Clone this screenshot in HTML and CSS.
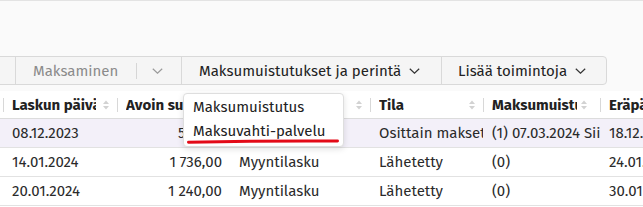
FILE: index.html
```html
<!DOCTYPE html>
<html lang="fi">
<head>
<meta charset="utf-8">
<title>Laskut</title>
<link rel="stylesheet" href="styles.css">
</head>
<body>
<div class="top">
  <div class="toolbar">
    <div class="btn btn-cut"></div>
    <div class="btn btn-pay disabled">
      <span class="label">Maksaminen</span>
      <span class="vsep"></span>
      <svg class="chev" width="11" height="6" viewBox="0 0 11 6"><path d="M0.8 0.8L5.5 5.2L10.2 0.8" fill="none" stroke="currentColor" stroke-width="1.2"/></svg>
    </div>
    <div class="btn btn-remind">
      <span class="label">Maksumuistutukset ja perintä</span>
      <svg class="chev" width="11" height="6" viewBox="0 0 11 6"><path d="M0.8 0.8L5.5 5.2L10.2 0.8" fill="none" stroke="currentColor" stroke-width="1.2"/></svg>
    </div>
    <div class="btn btn-more">
      <span class="label">Lisää toimintoja</span>
      <svg class="chev" width="11" height="6" viewBox="0 0 11 6"><path d="M0.8 0.8L5.5 5.2L10.2 0.8" fill="none" stroke="currentColor" stroke-width="1.2"/></svg>
    </div>
  </div>
</div>

<div class="table">
  <div class="row head">
    <div class="cell c0"></div>
    <div class="cell c1"><span class="hl">Laskun päivä</span><svg class="sort" width="6" height="10" viewBox="0 0 6 10"><path d="M0 4L3 0.5L6 4Z M0 6L3 9.5L6 6Z"/></svg></div>
    <div class="cell c2"><span class="hl">Avoin summa</span><svg class="sort" width="6" height="10" viewBox="0 0 6 10"><path d="M0 4L3 0.5L6 4Z M0 6L3 9.5L6 6Z"/></svg></div>
    <div class="cell c3"><span class="hl">Tyyppi</span><svg class="sort" width="6" height="10" viewBox="0 0 6 10"><path d="M0 4L3 0.5L6 4Z M0 6L3 9.5L6 6Z"/></svg></div>
    <div class="cell c4"><span class="hl">Tila</span><svg class="sort" width="6" height="10" viewBox="0 0 6 10"><path d="M0 4L3 0.5L6 4Z M0 6L3 9.5L6 6Z"/></svg></div>
    <div class="cell c5"><span class="hl">Maksumuistutus</span><svg class="sort" width="6" height="10" viewBox="0 0 6 10"><path d="M0 4L3 0.5L6 4Z M0 6L3 9.5L6 6Z"/></svg></div>
    <div class="cell c6"><span class="hl">Eräpäivä</span></div>
  </div>

  <div class="row sel">
    <div class="cell c0"></div>
    <div class="cell c1">08.12.2023</div>
    <div class="cell c2 num">568,00</div>
    <div class="cell c3">Myyntilasku</div>
    <div class="cell c4">Osittain maksettu</div>
    <div class="cell c5">(1) 07.03.2024 Siirretty</div>
    <div class="cell c6">18.12.2023</div>
  </div>
  <div class="row">
    <div class="cell c0"></div>
    <div class="cell c1">14.01.2024</div>
    <div class="cell c2 num">1 736,00</div>
    <div class="cell c3">Myyntilasku</div>
    <div class="cell c4">Lähetetty</div>
    <div class="cell c5">(0)</div>
    <div class="cell c6">24.01.2024</div>
  </div>
  <div class="row">
    <div class="cell c0"></div>
    <div class="cell c1">20.01.2024</div>
    <div class="cell c2 num">1 240,00</div>
    <div class="cell c3">Myyntilasku</div>
    <div class="cell c4">Lähetetty</div>
    <div class="cell c5">(0)</div>
    <div class="cell c6">30.01.2024</div>
  </div>

  <div class="menu">
    <div class="item">Maksumuistutus</div>
    <div class="item">Maksuvahti-palvelu</div>
    <svg class="mark" width="152" height="6" viewBox="0 0 152 6"><path d="M1.5 4.2C40 3.4 100 2.6 150.5 3" fill="none" stroke="#e30a17" stroke-width="3" stroke-linecap="round"/></svg>
  </div>
</div>
</body>
</html>
```

FILE: styles.css
```css
* { box-sizing: border-box; }

html, body {
  margin: 0;
  padding: 0;
  width: 643px;
  height: 207px;
  overflow: hidden;
  background: #ffffff;
  font-family: "Fira Sans", Roboto, "Noto Sans", sans-serif;
  font-size: 15px;
  color: #2a2a2a;
}

.top {
  height: 91px;
  border-top: 1px solid #e3e3e3;
  background: #fafafa;
  padding-top: 55px;
}

.toolbar {
  display: flex;
  margin-left: -10px;
}

.btn {
  display: flex;
  align-items: center;
  height: 29px;
  border: 1px solid #d9d9d9;
  background: #f5f5f5;
  margin-right: -1px;
  color: #222;
  white-space: nowrap;
}

.btn .chev { color: #333; flex: none; }

.btn-cut { width: 26px; }

.btn-pay {
  width: 167px;
  padding-left: 17px;
  padding-right: 18px;
}
.btn-pay.disabled { color: #8b8b8b; }
.btn-pay.disabled .chev { color: #9a9a9a; }
.btn-pay .vsep {
  width: 1px;
  height: 16px;
  background: #d6d6d6;
  margin-left: auto;
  margin-right: 15px;
}

.btn-remind {
  width: 261px;
  padding-left: 17px;
}
.btn-remind .chev { margin-left: 8px; }

.btn-more {
  width: 166px;
  padding-left: 16px;
  border-radius: 0 4px 4px 0;
}
.btn-more .chev { margin-left: 8px; }

.table {
  position: relative;
}

.row {
  display: grid;
  grid-template-columns: 3px 114px 113px 140px 113px 117px 1fr;
  height: 29px;
  border-bottom: 1px solid #e2e2e2;
  align-items: center;
}

.row.head {
  height: 28px;
  border-bottom: 1px solid #dcdcdc;
  font-weight: 700;
  color: #222;
}

.row.sel { background: #f3f0f9; }

.cell {
  white-space: nowrap;
  overflow: hidden;
  padding: 0 2px 0 9px;
  min-width: 0;
}

.head .cell {
  display: flex;
  align-items: center;
  height: 100%;
  padding: 0 8px 0 9px;
  background: linear-gradient(#d8d8d8, #d8d8d8) no-repeat left 55% / 1px 14px;
}
.head .c0 { background: none; }
.head .c5 { padding-right: 13px; }
.head .c5 .hl { margin-right: 4px; }
.head .c6 { padding-right: 0; }
.head .c6 .hl { margin-right: 0; }

.hl {
  flex: 1;
  overflow: hidden;
  min-width: 0;
  margin-right: 7px;
}

.sort { flex: none; fill: #d2d2d2; }

.cell.num {
  text-align: right;
  padding-right: 8px;
}

.menu {
  position: absolute;
  left: 183px;
  top: 2px;
  width: 161px;
  padding: 1px 0 3px;
  background: #fff;
  border: 1px solid #dedede;
  border-radius: 4px;
  box-shadow: 0 2px 6px rgba(0, 0, 0, 0.12);
  color: #222;
}

.item {
  height: 24px;
  line-height: 24px;
  padding-left: 9px;
  white-space: nowrap;
}

.mark {
  display: block;
  position: absolute;
  left: 3px;
  top: 44px;
}
```
